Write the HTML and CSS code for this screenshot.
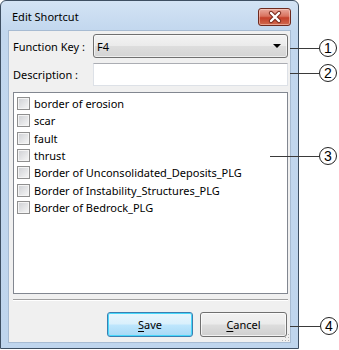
FILE: index.html
```html
<!DOCTYPE html>
<html lang="en">
<head>
    <meta charset="UTF-8">
    <title>Edit Shortcut</title>
    <link rel="stylesheet" href="styles.css">
</head>
<body>
    <div class="stage">
        <div class="window">
            <div class="titlebar">
                <span class="title">Edit Shortcut</span>
                <button class="close-btn">
                    <svg width="30" height="16" viewBox="0 0 30 16">
                        <path d="M11 4 L19 12 M19 4 L11 12" stroke="#7a2a1c" stroke-width="4.4" stroke-linecap="round"/>
                        <path d="M11 4 L19 12 M19 4 L11 12" stroke="#ffffff" stroke-width="2.4" stroke-linecap="round"/>
                    </svg>
                </button>
            </div>

            <div class="client">
                <div class="field-row">
                    <span class="field-label">Function Key :</span>
                    <div class="combo">
                        <span>F4</span>
                        <span class="combo-arrow"></span>
                    </div>
                </div>
                <div class="field-row row-desc">
                    <span class="field-label">Description :</span>
                    <input class="text-input" type="text">
                </div>

                <div class="listbox">
                    <div class="item"><span class="check"></span>border of erosion</div>
                    <div class="item"><span class="check"></span>scar</div>
                    <div class="item"><span class="check"></span>fault</div>
                    <div class="item"><span class="check"></span>thrust</div>
                    <div class="item"><span class="check"></span>Border of Unconsolidated_Deposits_PLG</div>
                    <div class="item"><span class="check"></span>Border of Instability_Structures_PLG</div>
                    <div class="item"><span class="check"></span>Border of Bedrock_PLG</div>
                </div>

                <div class="separator"></div>

                <div class="buttons">
                    <button class="btn btn-default"><u>S</u>ave</button>
                    <button class="btn"><u>C</u>ancel</button>
                </div>

                <svg class="grip" width="8" height="8" viewBox="0 0 8 8">
                    <rect x="6" y="0" width="1" height="1" fill="#b0b0b0"/>
                    <rect x="3" y="3" width="1" height="1" fill="#b0b0b0"/>
                    <rect x="6" y="3" width="1" height="1" fill="#b0b0b0"/>
                    <rect x="0" y="6" width="1" height="1" fill="#b0b0b0"/>
                    <rect x="3" y="6" width="1" height="1" fill="#b0b0b0"/>
                    <rect x="6" y="6" width="1" height="1" fill="#b0b0b0"/>
                </svg>
            </div>
        </div>

        <!-- callouts -->
        <div class="callout c1"><span class="leader"></span><span class="num">1</span></div>
        <div class="callout c2"><span class="leader"></span><span class="num">2</span></div>
        <div class="callout c3"><span class="leader"></span><span class="num">3</span></div>
        <div class="callout c4"><span class="leader"></span><span class="num">4</span></div>
    </div>
</body>
</html>
```

FILE: styles.css
```css
* {
    margin: 0;
    padding: 0;
    box-sizing: border-box;
}

body {
    background: #ffffff;
    font-family: 'Noto Sans', 'Open Sans', sans-serif;
    font-size: 11px;
    color: #000;
}

.stage {
    position: relative;
    width: 339px;
    height: 350px;
}

.window {
    width: 299px;
    height: 349px;
    border: 1px solid #3e4f62;
    border-radius: 6px 6px 0 0;
    background: linear-gradient(#d3e3f4 0px, #c2d7ee 30px, #bfd5ed 100%);
    display: flex;
    flex-direction: column;
}

.titlebar {
    height: 29px;
    display: flex;
    align-items: center;
    justify-content: space-between;
    padding: 0 7px 0 11px;
}

.title {
    font-size: 11px;
    color: #000;
    margin-top: 2px;
}

.close-btn {
    width: 33px;
    height: 18px;
    margin-top: 3px;
    border: 1px solid #6e2a1f;
    border-radius: 3px;
    background: linear-gradient(#e9a99c 0%, #d9735f 45%, #c4402a 55%, #d06a4f 100%);
    box-shadow: inset 0 0 0 1px rgba(255, 220, 210, 0.5);
    display: flex;
    align-items: center;
    justify-content: center;
}

.client {
    position: relative;
    height: 313px;
    margin: 0 7px;
    background: #f0f0f0;
    border: 1px solid #a7bbd2;
    padding: 3px 2px 0 4px;
    display: flex;
    flex-direction: column;
}

.field-row {
    display: flex;
    align-items: center;
    height: 24px;
}

.row-desc {
    height: 23px;
    margin-top: 5px;
}

.field-label {
    width: 80px;
}

.combo {
    flex: 1;
    height: 24px;
    border: 1px solid #707070;
    border-radius: 3px;
    background: linear-gradient(#f3f3f3 0%, #ebebeb 48%, #dddddd 52%, #d4d4d4 100%);
    box-shadow: inset 0 0 0 1px rgba(255, 255, 255, 0.6);
    display: flex;
    align-items: center;
    justify-content: space-between;
    padding: 0 6px 0 3px;
}

.combo-arrow {
    width: 0;
    height: 0;
    border-left: 4px solid transparent;
    border-right: 4px solid transparent;
    border-top: 4px solid #000;
}

.text-input {
    flex: 1;
    height: 23px;
    border: 1px solid #dde1e7;
    border-top-color: #abadb3;
    background: #ffffff;
    outline: none;
}

.listbox {
    margin-top: 6px;
    height: 202px;
    border: 1px solid #828790;
    background: #ffffff;
    padding: 2px 0 0 3px;
}

.item {
    display: flex;
    align-items: center;
    height: 17.33px;
    line-height: 17px;
}

.check {
    width: 13px;
    height: 13px;
    margin-right: 4px;
    border: 1px solid #8f8f8f;
    background: linear-gradient(135deg, #cdcfd3 0%, #f7f7f7 100%);
    box-shadow: inset 0 0 0 1px #f4f4f4;
}

.separator {
    margin-top: 5px;
    height: 2px;
    border-top: 1px solid #a0a0a0;
    border-bottom: 1px solid #ffffff;
}

.buttons {
    margin-top: 11px;
    display: flex;
    justify-content: flex-end;
    gap: 7px;
    padding-right: 1px;
}

.btn {
    width: 86px;
    height: 25px;
    font-family: 'Noto Sans', 'Open Sans', sans-serif;
    font-size: 11px;
    color: #000;
    border: 1px solid #707070;
    border-radius: 3px;
    background: linear-gradient(#f2f2f2 0%, #ebebeb 48%, #dddddd 52%, #cfcfcf 100%);
    box-shadow: inset 0 0 0 1px rgba(255, 255, 255, 0.7);
}

.btn + .btn {
    width: 87px;
}

.btn-default {
    border-color: #3c7fb1;
    background: linear-gradient(#eaf6fd 0%, #d9f0fc 48%, #bee6fd 52%, #a7d9f5 100%);
    box-shadow: inset 0 0 0 1px #48d8fb;
}

.btn u {
    text-underline-offset: 2px;
}

.grip {
    position: absolute;
    right: 0;
    bottom: 0;
}

/* callouts */
.callout {
    position: absolute;
    display: flex;
    align-items: center;
    height: 18px;
}

.leader {
    height: 1px;
    background: #3a3a3a;
}

.num {
    width: 18px;
    height: 18px;
    border: 1px solid #222;
    border-radius: 50%;
    display: flex;
    align-items: center;
    justify-content: center;
    font-family: 'Liberation Sans', sans-serif;
    font-size: 14px;
    line-height: 1;
}

.c1 { left: 290px; top: 39px; }
.c1 .leader { width: 29px; }

.c2 { left: 290px; top: 64px; }
.c2 .leader { width: 29px; }

.c3 { left: 270px; top: 147px; }
.c3 .leader { width: 49px; }

.c4 { left: 290px; top: 317px; }
.c4 .leader { width: 30px; }
```
